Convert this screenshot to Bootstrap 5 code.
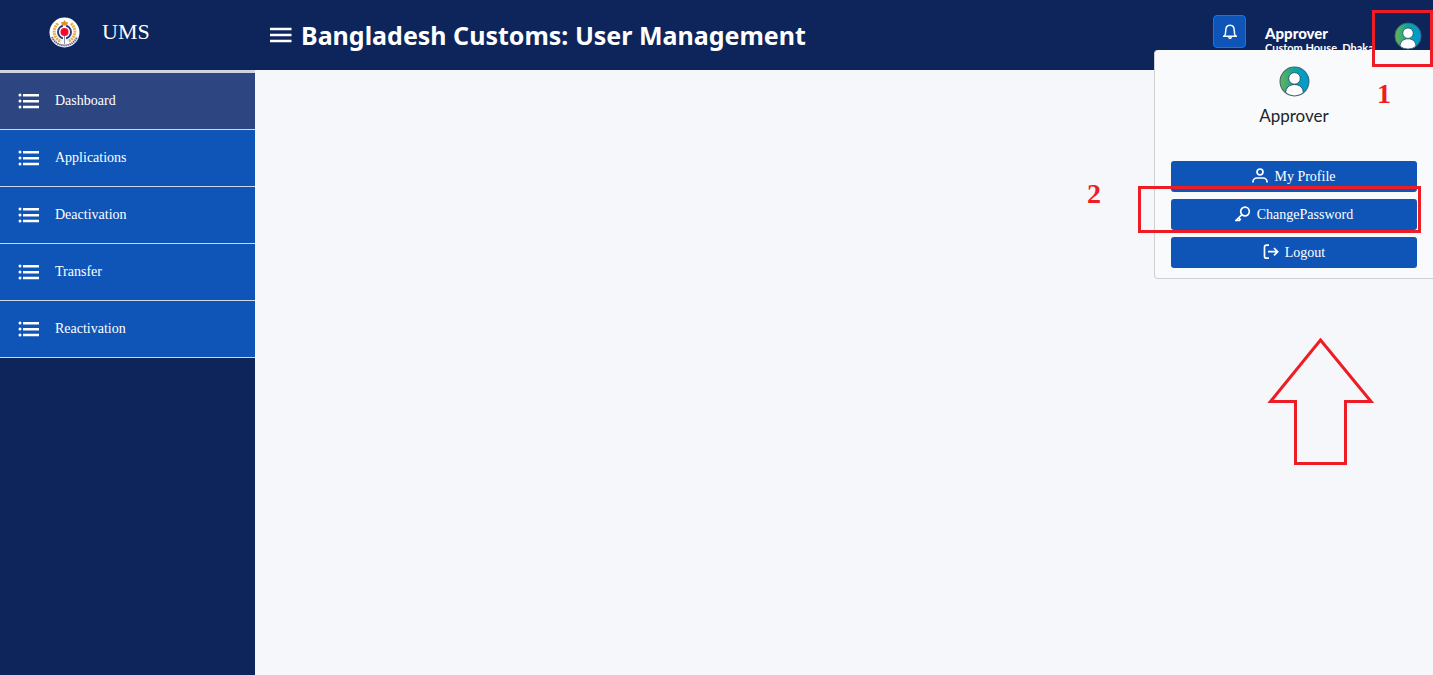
<!DOCTYPE html>
<html lang="en">
<head>
<meta charset="utf-8">
<meta name="viewport" content="width=device-width, initial-scale=1">
<title>Bangladesh Customs: User Management</title>
<link rel="stylesheet" href="https://cdn.jsdelivr.net/npm/bootstrap@5.3.0/dist/css/bootstrap.min.css">
<style>
  :root { --navy: #0e255c; --royal: #0f55b8; --mark: #ee1c24; }
  body { background: #f5f7fa; font-family: "Liberation Serif", serif; font-size: 14px; line-height: 20px; }
  .side { width: 255px; background: var(--navy); }
  .brand { height: 73px; border-bottom: 3px solid #cfd4de; padding: 0 0 6px 49px; gap: 22px; font-size: 22px; }
  .side-link { height: 57px; padding-left: 18px; gap: 15px; background: var(--royal); border-bottom: 1px solid #cfd8e8; color: #fff; }
  .side-link.active { background: #2d4682; }
  .topbar { height: 70px; background: var(--navy); color: #fff; padding-left: 14px; }
  .topbar h1 { font: 700 25px/36px "Noto Sans", sans-serif; }
  .btn.bell { width: 33px; height: 33px; background: var(--royal); border: 1px solid #007bff; border-radius: 4px; margin: 15px 19px 0 0; }
  .who { width: 129px; padding-top: 25px; font: 700 11px/14px Lato, sans-serif; }
  .who strong { font-size: 15px; line-height: 16px; }
  .avatar-btn { margin: 22px 11px 0 0; }
  .account { top: 50px; right: 0; width: 279px; padding: 16px 16px 10px; background: #f8fafc; border: 1px solid #cdd1d6; border-width: 0 0 1px 1px; border-radius: 4px 0 0 4px; }
  .account-name { font: 17px/24px Lato, sans-serif; color: #212529; margin: 7px 0 33px; }
  .account-actions { gap: 7px; }
  .account .btn { height: 31px; background: var(--royal); color: #fff; border-radius: 3px; font-size: 14px; line-height: 20px; gap: 6px; }
  .note { position: absolute; z-index: 5; pointer-events: none; }
  .note-box { border: 3px solid var(--mark); }
  .note-num { color: var(--mark); font-size: 28px; line-height: 32px; font-weight: 700; }
  .box-one { top: 10px; right: 0; width: 61px; height: 57px; }
  .box-two { top: 186px; right: 12px; width: 283px; height: 47px; }
  .num-one { top: 78px; right: 42px; }
  .num-two { top: 178px; right: 332px; }
  .note-arrow { top: 338px; right: 59px; }
</style>
</head>
<body>
<svg width="0" height="0" class="position-absolute" aria-hidden="true">
  <defs>
    <linearGradient id="avatarFill"><stop offset="0" stop-color="#6cb34f"/><stop offset=".5" stop-color="#09a5a0"/><stop offset="1" stop-color="#0098d8"/></linearGradient>
    <clipPath id="avatarClip"><circle cx="15" cy="15" r="14"/></clipPath>
    <symbol id="avatar" viewBox="0 0 30 30">
      <circle cx="15" cy="15" r="14" fill="url(#avatarFill)"/>
      <g clip-path="url(#avatarClip)" fill="#fff" stroke="#234057" stroke-width=".8"><path d="M6.500 30v-4C6.500 21 10 18 15 18s8.500 3 8.500 8v4z"/><circle cx="15" cy="12" r="5.600"/></g>
      <circle cx="15" cy="15" r="14" fill="none" stroke="#3d6477"/>
    </symbol>
    <symbol id="list" viewBox="0 0 22 18"><g fill="#fff"><circle cx="2" cy="3" r="1.500"/><circle cx="2" cy="9" r="1.500"/><circle cx="2" cy="15" r="1.500"/><path d="M5 2h16v2.400H5zM5 8h16v2.400H5zM5 13.800h16v2.400H5z"/></g></symbol>
  </defs>
</svg>
<div class="d-flex min-vh-100 position-relative">
  <aside class="side flex-shrink-0">
    <div class="brand d-flex align-items-center text-white">
      <svg width="31" height="31" viewBox="0 0 31 31" role="img" aria-label="Customs emblem">
        <circle cx="15.500" cy="15.500" r="15" fill="#fff"/>
        <path d="M3 20a13.500 13.500 0 0 0 25 0" fill="none" stroke="#66669e" stroke-width="2" stroke-dasharray="1.500 .6"/>
        <path d="M9 6.500C3 12 4 21 12 24.500M22 6.500c6 5.500 5 14.500-3 18" fill="none" stroke="#e5ad55" stroke-width="3" stroke-dasharray="2 .7"/>
        <circle cx="15.500" cy="15" r="6.500" fill="#fff" stroke="#293d7e" stroke-width="2"/>
        <path d="M15.500 8v18" stroke="#fff" stroke-width="3"/><path d="M15.500 16v11" stroke="#8a92b8"/>
        <path d="M12 5l2 .3 1.500-2.300L17 5.300l2-.3-1 3.500h-5z" fill="#dc9228"/>
        <circle cx="15.500" cy="15" r="4" fill="#f7082b"/>
      </svg>
      <span>UMS</span>
    </div>
    <nav aria-label="Main">
      <a href="#" class="side-link active d-flex align-items-center text-decoration-none" aria-current="page"><svg width="22" height="18"><use href="#list"/></svg>Dashboard</a>
      <a href="#" class="side-link d-flex align-items-center text-decoration-none"><svg width="22" height="18"><use href="#list"/></svg>Applications</a>
      <a href="#" class="side-link d-flex align-items-center text-decoration-none"><svg width="22" height="18"><use href="#list"/></svg>Deactivation</a>
      <a href="#" class="side-link d-flex align-items-center text-decoration-none"><svg width="22" height="18"><use href="#list"/></svg>Transfer</a>
      <a href="#" class="side-link d-flex align-items-center text-decoration-none"><svg width="22" height="18"><use href="#list"/></svg>Reactivation</a>
    </nav>
  </aside>
  <div class="flex-grow-1">
    <header class="topbar d-flex align-items-start">
      <div class="d-flex align-items-center align-self-center gap-2 me-auto">
        <button type="button" class="btn p-0 border-0 d-flex" aria-label="Toggle menu"><svg width="24" height="18" viewBox="0 0 24 18"><path d="M1 3h21.500M1 9h21.500M1 15h21.500" stroke="#fff" stroke-width="2.300"/></svg></button>
        <h1 class="m-0 text-nowrap">Bangladesh Customs: User Management</h1>
      </div>
      <button type="button" class="btn bell p-0 d-flex align-items-center justify-content-center" aria-label="Notifications">
        <svg width="16" height="16" viewBox="0 0 16 16" fill="none" stroke="#fff" stroke-width="1.500"><path d="M1 12.300h14M2.500 12c1.200-1.500 1.200-3 1.200-5 0-3.500 1.800-5.700 4.300-5.700S12.300 3.500 12.300 7c0 2 0 3.500 1.200 5"/><path d="M6.500 13.200a1.500 1.500 0 0 0 3 0" fill="#fff" stroke-width="1"/></svg>
      </button>
      <div class="who text-nowrap"><strong class="d-block">Approver</strong>Custom House, Dhaka</div>
      <button type="button" class="btn avatar-btn p-0 border-0 d-flex" aria-label="Account"><svg width="28" height="28"><use href="#avatar"/></svg></button>
    </header>
    <main></main>
  </div>

  <section class="account position-absolute" aria-label="Account menu">
    <div class="text-center">
      <svg width="31" height="31" class="d-block mx-auto"><use href="#avatar"/></svg>
      <div class="account-name">Approver</div>
    </div>
    <div class="account-actions d-grid">
      <button type="button" class="btn p-0 border-0 d-flex align-items-center justify-content-center"><svg width="16" height="18" viewBox="0 0 16 18" fill="none" stroke="#fff" stroke-width="1.700"><circle cx="8" cy="4" r="3"/><path d="M1 14.500v-.8C1 11.500 3 10 5 10h6c2 0 4 1.500 4 3.700v.8"/></svg>My Profile</button>
      <button type="button" class="btn p-0 border-0 d-flex align-items-center justify-content-center"><svg width="16" height="18" viewBox="0 0 16 18" fill="none" stroke="#fff" stroke-width="1.700"><circle cx="10" cy="5.500" r="4.300"/><path d="M7 8.500l-6 6h4M3.500 12l2.300 2"/></svg>ChangePassword</button>
      <button type="button" class="btn p-0 border-0 d-flex align-items-center justify-content-center"><svg width="16" height="18" viewBox="0 0 16 18" fill="none" stroke="#fff" stroke-width="1.700"><path d="M6 1.200H3.500Q1.500 1.200 1.500 3.200v9q0 2 2 2H6M5 7.700h10M11 4l3.700 3.700L11 11.400"/></svg>Logout</button>
    </div>
  </section>

  <div class="note note-box box-one"></div>
  <div class="note note-num num-one">1</div>
  <div class="note note-box box-two"></div>
  <div class="note note-num num-two">2</div>
  <svg class="note note-arrow" width="107" height="128" viewBox="0 0 107 128" aria-hidden="true"><path d="M53.500 2L104 63.500H78.500v62h-50v-62H3.500z" fill="none" stroke="#ee1c24" stroke-width="3"/></svg>
</div>
<script src="https://cdn.jsdelivr.net/npm/bootstrap@5.3.0/dist/js/bootstrap.bundle.min.js"></script>
</body>
</html>
